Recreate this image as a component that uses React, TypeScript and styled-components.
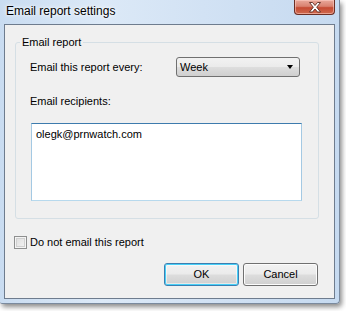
import React from "react";
import styled, { createGlobalStyle } from "styled-components";

const GlobalStyle = createGlobalStyle`
  html, body {
    margin: 0;
    padding: 0;
    background: #ffffff;
  }
  body {
    font-family: "Segoe UI", "Liberation Sans", Arial, sans-serif;
    font-size: 11px;
    color: #000;
  }
`;

function CloseGlyph() {
  return (
    <svg width="14" height="11" viewBox="0 0 14 11">
      <path
        d="M1.5 0.5 L4.5 0.5 L7 3.5 L9.5 0.5 L12.5 0.5 L8.7 5.2 L12.5 10 L9.5 10 L7 7 L4.5 10 L1.5 10 L5.3 5.2 Z"
        fill="#ffffff"
        stroke="#5b2b22"
        strokeWidth="0.9"
        strokeLinejoin="round"
      />
    </svg>
  );
}

function EmailReportSettings() {
  return (
    <Page>
      <Window>
        <TitleBar>
          <Title>Email report settings</Title>
          <CloseButton>
            <CloseGlyph />
          </CloseButton>
        </TitleBar>
        <Client>
          <Group>
            <Legend>Email report</Legend>
            <FieldRow>
              <Label>Email this report every:</Label>
              <Select>
                <span>Week</span>
                <Arrow />
              </Select>
            </FieldRow>
            <RecipientsLabel>Email recipients:</RecipientsLabel>
            <Recipients>olegk@prnwatch.com</Recipients>
          </Group>
          <CheckRow>
            <CheckBox />
            <span>Do not email this report</span>
          </CheckRow>
          <ButtonRow>
            <Button $primary>OK</Button>
            <Button>Cancel</Button>
          </ButtonRow>
        </Client>
      </Window>
    </Page>
  );
}

export default function App() {
  return (
    <>
      <GlobalStyle />
      <EmailReportSettings />
    </>
  );
}

const Page = styled.div`
  width: 346px;
  height: 311px;
  overflow: hidden;
`;

const Window = styled.div`
  width: 340px;
  height: 304px;
  box-sizing: border-box;
  padding: 0 4px 4px 4px;
  display: flex;
  flex-direction: column;
  background: linear-gradient(90deg, #c9dcf1 0%, #dce9f7 30%, #d2e2f4 60%, #c6daf0 100%);
  border-right: 1px solid #7a8a9e;
  border-bottom: 1px solid #7a8a9e;
  border-bottom-right-radius: 4px;
  border-bottom-left-radius: 2px;
  box-shadow: 2px 3px 5px rgba(0, 0, 0, 0.45);
`;

const TitleBar = styled.div`
  height: 24px;
  display: flex;
  align-items: flex-start;
  justify-content: space-between;
`;

const Title = styled.div`
  font-size: 12px;
  line-height: 14px;
  padding: 4px 0 0 2px;
  text-shadow: 0 0 6px #ffffff, 0 0 3px #ffffff;
`;

const CloseButton = styled.div`
  width: 41px;
  height: 15px;
  box-sizing: border-box;
  border: 1px solid #6b2e24;
  border-top: none;
  border-radius: 0 0 4px 4px;
  background: linear-gradient(180deg, #e9a99b 0%, #d98270 45%, #c54b33 55%, #cf6a4f 100%);
  box-shadow: inset 0 0 0 1px rgba(255, 210, 200, 0.55);
  display: flex;
  align-items: center;
  justify-content: center;
`;

const Client = styled.div`
  flex: 1;
  background: #f0f0f0;
  border: 1px solid #6e7c8e;
  display: flex;
  flex-direction: column;
`;

const Group = styled.fieldset`
  margin: 10px 0 0 10px;
  width: 304px;
  height: 184px;
  box-sizing: border-box;
  padding: 0 0 0 14px;
  border: 1px solid #d5dfe5;
  border-radius: 3px;
  display: flex;
  flex-direction: column;
  align-items: flex-start;
`;

const Legend = styled.legend`
  margin-left: -10px;
  padding: 0 2px;
  line-height: 15px;
  font-size: 11px;
`;

const FieldRow = styled.div`
  display: flex;
  align-items: center;
  margin-top: 7px;
  height: 20px;
`;

const Label = styled.div`
  width: 146px;
  line-height: 15px;
`;

const Select = styled.div`
  width: 124px;
  height: 20px;
  box-sizing: border-box;
  border: 1px solid #707070;
  border-radius: 3px;
  background: linear-gradient(180deg, #f2f2f2 0%, #ebebeb 48%, #dddddd 52%, #cfcfcf 100%);
  display: flex;
  align-items: center;
  justify-content: space-between;
  padding: 0 6px 0 3px;
  line-height: 15px;
`;

const Arrow = styled.span`
  width: 0;
  height: 0;
  border-left: 3.5px solid transparent;
  border-right: 3.5px solid transparent;
  border-top: 4px solid #000;
`;

const RecipientsLabel = styled.div`
  margin-top: 17px;
  line-height: 15px;
`;

const Recipients = styled.div`
  margin-top: 14px;
  margin-left: 1px;
  width: 271px;
  height: 78px;
  box-sizing: border-box;
  background: #fff;
  border: 1px solid #a4c9e3;
  border-top-color: #3d7bad;
  border-bottom-color: #b7d9ed;
  padding: 3px 0 0 4px;
  line-height: 14px;
`;

const CheckRow = styled.div`
  display: flex;
  align-items: center;
  gap: 3px;
  margin: 17px 0 0 9px;
  height: 13px;
  line-height: 15px;
`;

const CheckBox = styled.span`
  width: 13px;
  height: 13px;
  box-sizing: border-box;
  border: 1px solid #8e8f8f;
  background: linear-gradient(135deg, #dcdcdc 0%, #f4f4f4 100%);
  box-shadow: inset 0 0 0 1px #f4f4f4, inset 0 0 0 2px #d0d0d0;
`;

const ButtonRow = styled.div`
  display: flex;
  justify-content: flex-end;
  gap: 4px;
  margin-top: 14px;
  padding-right: 16px;
`;

const Button = styled.div<{ $primary?: boolean }>`
  width: 75px;
  height: 23px;
  box-sizing: border-box;
  border: 1px solid ${(p) => (p.$primary ? "#3c7fb1" : "#707070")};
  border-radius: 3px;
  background: linear-gradient(180deg, #f2f2f2 0%, #ebebeb 48%, #dddddd 52%, #cfcfcf 100%);
  box-shadow: ${(p) =>
    p.$primary ? "inset 0 0 0 1px #48d0f8, inset 0 0 0 2px rgba(255,255,255,0.5)" : "inset 0 0 0 1px #fcfcfc"};
  display: flex;
  align-items: center;
  justify-content: center;
  line-height: 15px;
`;
